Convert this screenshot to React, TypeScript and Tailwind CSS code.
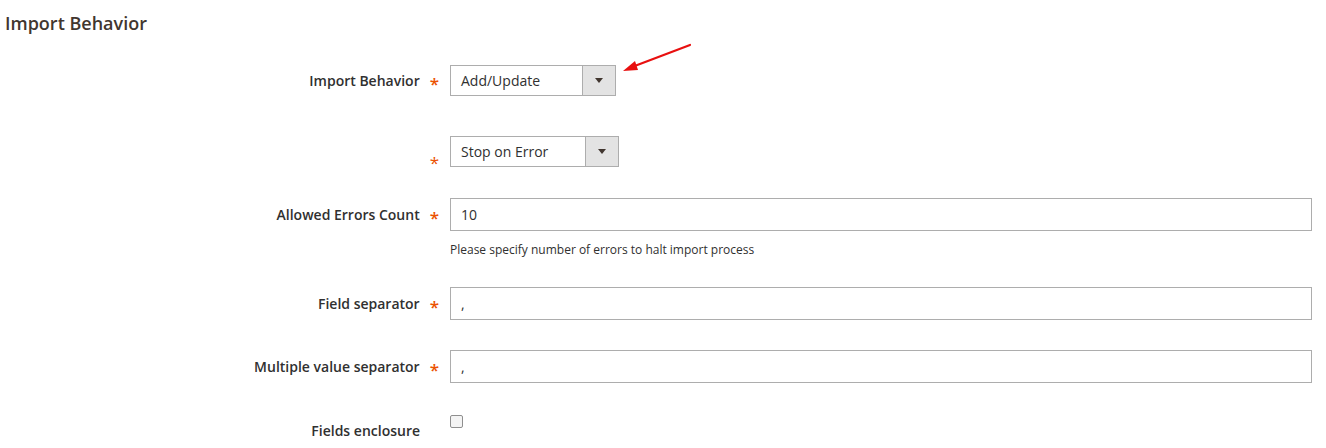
import React from 'react'

const font = { fontFamily: '"Open Sans", "Liberation Sans", sans-serif' }

function Req({ className = '' }: { className?: string }) {
  return <span className={`ml-[10px] text-[17px] leading-none text-[#eb5202] ${className}`}>*</span>
}

function Select({ value, width }: { value: string; width: string }) {
  return (
    <div className={`flex h-[31px] ${width} border border-[#adadad] bg-white`}>
      <div className="flex-1 pl-[10px] text-[14px] leading-[29px] text-[#303030]">{value}</div>
      <div className="flex w-[33px] items-center justify-center border-l border-[#adadad] bg-[#e3e3e3]">
        <span className="h-0 w-0 border-x-[4px] border-t-[5px] border-x-transparent border-t-[#41362f]" />
      </div>
    </div>
  )
}

function TextInput({ value }: { value: string }) {
  return (
    <div className="h-[33px] w-[862px] border border-[#adadad] bg-white pl-[10px] text-[14px] leading-[31px] text-[#303030]">
      {value}
    </div>
  )
}

function Row({ label, children, required = true, className = '' }: { label: string; children: React.ReactNode; required?: boolean; className?: string }) {
  return (
    <div className={`flex ${className}`}>
      <div className="flex w-[450px] shrink-0 items-center justify-end pr-[11px] text-[14px] font-semibold text-[#303030] self-start h-[33px]">
        <span>{label}</span>
        {required && <Req className="mt-[6px]" />}
      </div>
      <div>{children}</div>
    </div>
  )
}

export default function App() {
  return (
    <div className="relative h-[448px] w-[1326px] bg-white" style={font}>
      <h2 className="pl-[5px] pt-[10px] text-[18px] font-semibold text-[#41362f]">Import Behavior</h2>

      <div className="mt-[28px] flex">
        <div className="flex h-[31px] w-[450px] items-center justify-end pr-[11px] text-[14px] font-semibold text-[#303030]">
          <span>Import Behavior</span>
          <Req className="mt-[6px]" />
        </div>
        <Select value="Add/Update" width="w-[166px]" />
      </div>

      <div className="mt-[40px] flex">
        <div className="flex h-[31px] w-[450px] items-end justify-end pr-[11px]">
          <Req className="mb-[-4px]" />
        </div>
        <Select value="Stop on Error" width="w-[169px]" />
      </div>

      <Row label="Allowed Errors Count" className="mt-[31px]">
        <TextInput value="10" />
        <p className="mt-[10px] text-[12px] text-[#303030]">Please specify number of errors to halt import process</p>
      </Row>

      <Row label="Field separator" className="mt-[28px]">
        <TextInput value="," />
      </Row>

      <Row label="Multiple value separator" className="mt-[30px]">
        <TextInput value="," />
      </Row>

      <div className="mt-[30px] flex">
        <div className="w-[450px] shrink-0 pr-[30px] pt-[7px] text-right text-[14px] font-semibold text-[#303030]">
          Fields enclosure
        </div>
        <div className="pt-[2px]">
          <div className="h-[13px] w-[13px] rounded-[2px] border border-[#8f8f8f] bg-[#f4f4f4]" />
        </div>
      </div>

      <svg className="absolute left-[618px] top-[40px]" width="80" height="36" viewBox="0 0 80 36">
        <line x1="72" y1="5" x2="14" y2="27" stroke="#e81010" strokeWidth="2.2" strokeLinecap="round" />
        <polygon points="5,31 17,21 20,30" fill="#e81010" />
      </svg>
    </div>
  )
}
